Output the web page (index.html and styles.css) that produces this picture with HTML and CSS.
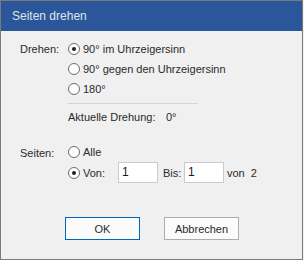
FILE: index.html
```html
<!DOCTYPE html>
<html>
<head>
<meta charset="utf-8">
<link rel="stylesheet" href="styles.css">
</head>
<body>
<div class="window">
  <div class="titlebar">Seiten drehen</div>
  <div class="content">
    <div class="group">
      <div class="label">Drehen:</div>
      <div class="options">
        <div class="opt"><span class="radio checked"></span><span>90° im Uhrzeigersinn</span></div>
        <div class="opt"><span class="radio"></span><span>90° gegen den Uhrzeigersinn</span></div>
        <div class="opt"><span class="radio"></span><span>180°</span></div>
        <div class="sep"></div>
        <div class="current"><span class="cur-label">Aktuelle Drehung:</span><span>0°</span></div>
      </div>
    </div>
    <div class="group pages">
      <div class="label">Seiten:</div>
      <div class="options">
        <div class="opt"><span class="radio"></span><span>Alle</span></div>
        <div class="opt range"><span class="radio checked"></span><span class="von">Von:</span><span class="field">1</span><span class="bis">Bis:</span><span class="field">1</span><span class="of">von&nbsp; 2</span></div>
      </div>
    </div>
    <div class="buttons">
      <div class="btn default">OK</div>
      <div class="btn">Abbrechen</div>
    </div>
  </div>
</div>
</body>
</html>
```
FILE: styles.css
```css
* { box-sizing: border-box; }
body { margin: 0; background: #f0f0f0; font-family: "Liberation Sans", Arial, sans-serif; font-size: 11px; color: #2a2a2a; }
.window { width: 303px; height: 260px; border: 1px solid #7a7a7a; background: #f0f0f0; display: flex; flex-direction: column; }
.titlebar { height: 30px; background: #2b579a; color: #dfe5ef; font-size: 12px; padding: 8px 0 0 11px; line-height: 14px; }
.content { padding: 8px 0 0 19px; display: flex; flex-direction: column; }
.group { display: flex; }
.label { width: 48px; line-height: 20px; }
.options { display: flex; flex-direction: column; }
.opt { display: flex; align-items: center; height: 20px; }
.radio { width: 12px; height: 12px; border: 1px solid #6a6a6a; border-radius: 50%; background: #fff; margin-right: 3px; display: flex; align-items: center; justify-content: center; }
.radio.checked::after { content: ""; width: 4px; height: 4px; border-radius: 50%; background: #222; }
.sep { width: 130px; height: 1px; background: #d4d4d4; margin-top: 4px; }
.current { display: flex; height: 20px; align-items: center; margin-top: 3px; }
.cur-label { width: 98px; }
.pages { margin-top: 15px; }
.pages .label { line-height: 22px; }
.opt.range { height: 21px; }
.von { width: 35px; }
.field { width: 40px; height: 21px; background: #fff; border: 1px solid #cacaca; padding-left: 3px; font-size: 12px; line-height: 19px; color: #1a1a1a; }
.bis { width: 26px; padding-left: 5px; }
.of { padding-left: 3px; }
.buttons { display: flex; margin-top: 34px; padding-left: 45px; gap: 24px; }
.btn { width: 75px; height: 23px; border: 1px solid #adadad; background: #fbfbfb; display: flex; align-items: center; justify-content: center; }
.btn.default { border-color: #0067c0; }
```
